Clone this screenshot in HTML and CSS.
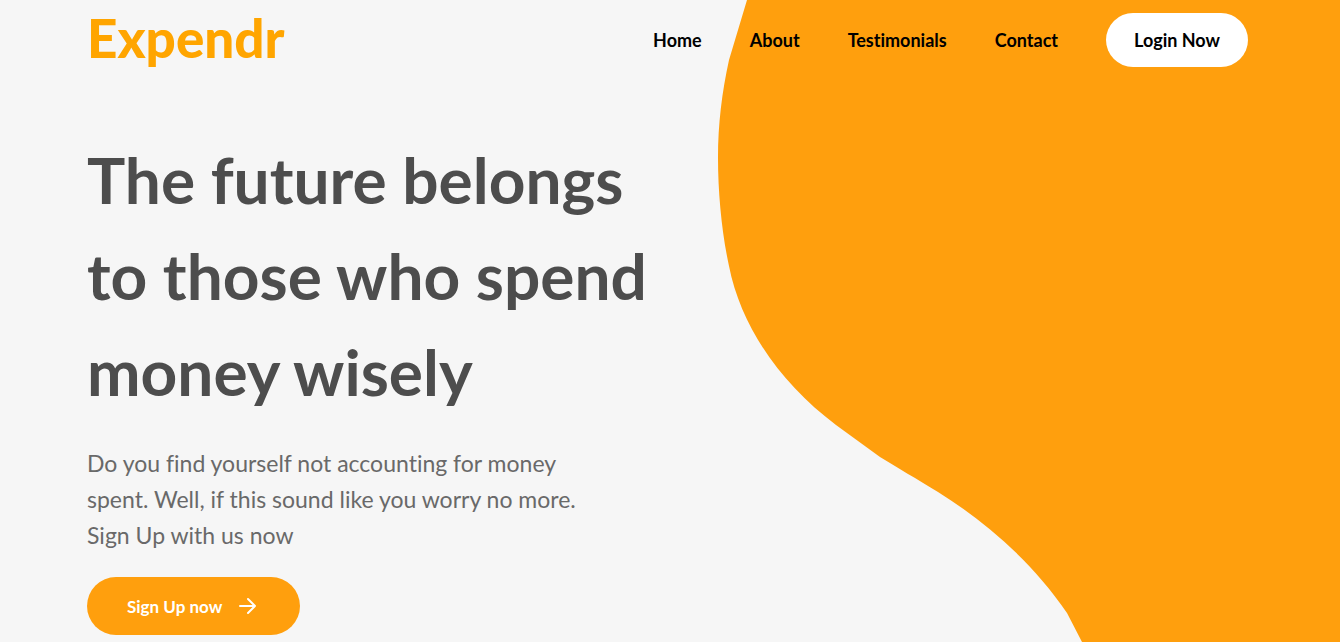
FILE: index.html
```html
<!DOCTYPE html>
<html lang="en">
<head>
  <meta charset="utf-8">
  <meta name="viewport" content="width=device-width, initial-scale=1">
  <title>Expendr</title>
  <link rel="stylesheet" href="styles.css">
</head>
<body>
  <div class="page">
    <svg class="backdrop" viewBox="0 0 1340 642" preserveAspectRatio="xMaxYMin slice" aria-hidden="true">
      <path d="M747 0L729 60C722 92 718 124 718 158C718 194 722 234 729 266C741 327 781 384 836 425Q858 441 880 457C896 467 917 479 938 492C983 520 1031 560 1067 613L1082 642H1340V0Z"/>
    </svg>
    <header class="header">
      <a class="logo" href="#">Expendr</a>
      <nav class="nav" aria-label="Main">
        <a class="nav-link" href="#home">Home</a>
        <a class="nav-link" href="#about">About</a>
        <a class="nav-link" href="#testimonials">Testimonials</a>
        <a class="nav-link" href="#contact">Contact</a>
        <button class="login" type="button">Login Now</button>
      </nav>
    </header>
    <main class="hero" id="home">
      <h1 class="title">The future belongs<br>to those who spend<br>money wisely</h1>
      <p class="intro">Do you find yourself not accounting for money<br>spent. Well, if this sound like you worry no more.<br>Sign Up with us now</p>
      <button class="signup" type="button">
        <span>Sign Up now</span>
        <svg class="arrow" viewBox="0 0 18 18" aria-hidden="true">
          <path d="M1 9H16M9 2L16 9L9 16"/>
        </svg>
      </button>
    </main>
  </div>
</body>
</html>
```

FILE: styles.css
```css
* {
  box-sizing: border-box;
}

body {
  margin: 0;
  background: #f6f6f6;
  font-family: Lato, "Open Sans", sans-serif;
  font-variant-ligatures: none;
}

.page {
  position: relative;
  min-height: 100vh;
  overflow: hidden;
}

.backdrop {
  position: absolute;
  inset: 0;
  z-index: -1;
  width: 100%;
  height: 100%;
  fill: #ff9f0d;
}

.header {
  display: flex;
  align-items: center;
  justify-content: space-between;
  height: 80px;
  padding: 0 92px 0 87px;
}

.logo {
  padding-bottom: 4px;
  color: #ffa500;
  font-size: 53px;
  font-weight: 900;
  line-height: 76px;
  text-decoration: none;
}

.nav {
  display: flex;
  align-items: center;
  gap: 48px;
}

.nav-link {
  color: #000;
  font-size: 18px;
  font-weight: 700;
  text-decoration: none;
}

.login {
  height: 54px;
  padding: 0 28px;
  border: 0;
  border-radius: 27px;
  background: #fff;
  color: #000;
  font: 700 18px Lato, "Open Sans", sans-serif;
}

.hero {
  padding: 52px 87px 7px;
}

.title {
  margin: 0;
  color: #4d4d4d;
  font-size: 64px;
  font-weight: 700;
  line-height: 96px;
  white-space: nowrap;
}

.intro {
  margin: 25px 0 24px;
  color: #696969;
  font-size: 23px;
  line-height: 36px;
}

.signup {
  display: flex;
  align-items: center;
  gap: 17px;
  height: 58px;
  padding: 0 43px 0 40px;
  border: 0;
  border-radius: 29px;
  background: #ff9f0d;
  color: #fff;
  font: 700 17px Lato, "Open Sans", sans-serif;
}

.arrow {
  width: 18px;
  height: 18px;
  fill: none;
  stroke: #fff;
  stroke-width: 2;
  stroke-linecap: round;
  stroke-linejoin: round;
}
```
